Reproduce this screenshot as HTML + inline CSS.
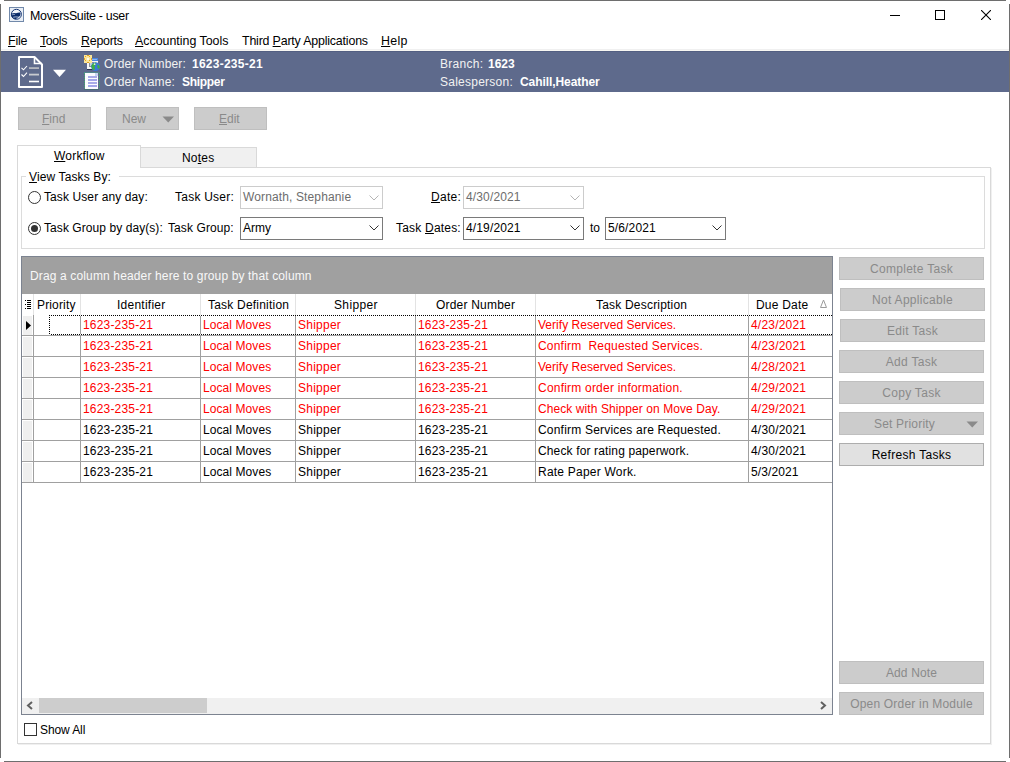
<!DOCTYPE html>
<html><head><meta charset="utf-8">
<style>
html,body{margin:0;padding:0;width:1010px;height:762px;overflow:hidden;background:#fff;position:relative}
div,span{box-sizing:border-box}
.a{position:absolute}
.t{position:absolute;white-space:pre;font-family:"Liberation Sans",sans-serif;font-size:12px;line-height:14px;color:#000}
.u{text-decoration:underline;text-underline-offset:1px}
.btn{position:absolute;background:#cccccc;border:1px solid #bfbfbf}
.dis{color:#8a8a8a}
.hl{background:#a0a0a0}
</style></head><body>

<!-- window border -->
<div class="a" style="left:4px;top:0;width:1002px;height:1px;background:#6e6e6e"></div>
<div class="a" style="left:4px;top:761px;width:1002px;height:1px;background:#6e6e6e"></div>
<div class="a" style="left:0;top:4px;width:1px;height:754px;background:#6e6e6e"></div>
<div class="a" style="left:1009px;top:4px;width:1px;height:754px;background:#6e6e6e"></div>

<!-- title bar -->
<svg class="a" style="left:9px;top:7px" width="15" height="15" viewBox="0 0 15 15">
  <rect x="0.5" y="0.5" width="14" height="14" fill="#e9eef5" stroke="#7189aa"/>
  <circle cx="7.4" cy="7.3" r="5" fill="#f2f5fa" stroke="#163574" stroke-width="1"/>
  <path d="M2.3 7 Q4.5 5.4 7 6.3 Q9.5 5.2 11.2 5.5 Q12 7 11 8.8 Q9 11 6.5 12.3 Q3.5 12 2.4 9.2 Z" fill="#0b2c6a"/>
  <path d="M3.2 7.8 Q4.5 7.2 5.8 7.4" fill="none" stroke="#cfdbee" stroke-width="0.8"/>
  <path d="M4.2 10.2 Q6.8 9.6 9.4 10.1 Q10.2 10.6 10.8 10" fill="none" stroke="#cfdbee" stroke-width="0.8"/>
</svg>
<div class="t" style="left:30px;top:9px;font-size:12.4px;letter-spacing:-0.29px">MoversSuite - user</div>
<div class="a" style="left:890px;top:15px;width:10px;height:1px;background:#000"></div>
<div class="a" style="left:935px;top:10px;width:10px;height:10px;border:1px solid #000"></div>
<svg class="a" style="left:981px;top:10px" width="10" height="10" viewBox="0 0 10 10"><path d="M0 0L10 10M10 0L0 10" stroke="#000" stroke-width="1.1"/></svg>

<!-- menu -->
<div class="t" style="left:8px;top:34px;font-size:12.4px;letter-spacing:-0.2px"><span class="u">F</span>ile</div>
<div class="t" style="left:40px;top:34px;font-size:12.4px;letter-spacing:-0.4px"><span class="u">T</span>ools</div>
<div class="t" style="left:81px;top:34px;font-size:12.4px;letter-spacing:-0.23px"><span class="u">R</span>eports</div>
<div class="t" style="left:135px;top:34px;font-size:12.4px;letter-spacing:0px"><span class="u">A</span>ccounting Tools</div>
<div class="t" style="left:242px;top:34px;font-size:12.4px;letter-spacing:-0.18px">Third <span class="u">P</span>arty Applications</div>
<div class="t" style="left:381px;top:34px;font-size:12.4px;letter-spacing:0.3px"><span class="u">H</span>elp</div>

<!-- header band -->
<div class="a" style="left:1px;top:49px;width:1008px;height:1px;background:#f0f0f0"></div>
<div class="a" style="left:1px;top:50px;width:1008px;height:1px;background:#f8f7f3"></div>
<div class="a" style="left:1px;top:51px;width:1008px;height:41px;background:#5e6a8c"></div>
<div class="a" style="left:1px;top:51px;width:1008px;height:1px;background:#535f82"></div>

<svg class="a" style="left:16px;top:54px" width="54" height="36" viewBox="0 0 54 36">
  <path d="M3 3 H18.5 L26 10.5 V33 H3 Z" fill="none" stroke="#fff" stroke-width="2" stroke-linejoin="round"/>
  <path d="M18.5 3 V9.5 H26" fill="none" stroke="#fff" stroke-width="1.6"/>
  <path d="M5.5 13.8 L7.5 15.8 L11 12" fill="none" stroke="#fff" stroke-width="1.1"/>
  <path d="M5.5 20.5 L7.5 22.5 L11 18.7" fill="none" stroke="#fff" stroke-width="1.1"/>
  <rect x="13" y="13.2" width="10" height="1.8" fill="#b4b7bf"/>
  <rect x="13" y="19.7" width="10" height="1.8" fill="#c8cacf"/>
  <rect x="13" y="26.7" width="10" height="1.6" fill="#fff"/>
  <path d="M37 15.8 H50 L43.5 23 Z" fill="#fff"/>
</svg>

<!-- order number icon -->
<svg class="a" style="left:83px;top:54px" width="18" height="36" viewBox="0 0 18 36" shape-rendering="crispEdges">
  <rect x="4" y="4" width="11" height="11" fill="#f6f6f6"/>
  <rect x="4" y="4" width="11" height="3" fill="#4a86e0"/>
  <rect x="5" y="5" width="9" height="1" fill="#8fb6f0"/>
  <rect x="6" y="8" width="5" height="5" fill="#8a8f9c"/>
  <rect x="7" y="9" width="3" height="3" fill="#c9d3e0"/>
  <rect x="4" y="15" width="8" height="1" fill="#2a3552"/>
  <rect x="1" y="1" width="8" height="8" fill="#fbe69a"/>
  <rect x="4" y="1" width="2" height="1" fill="#e6a21e"/><rect x="4" y="8" width="2" height="1" fill="#e6a21e"/>
  <rect x="1" y="4" width="1" height="2" fill="#e6a21e"/><rect x="8" y="4" width="1" height="2" fill="#e6a21e"/>
  <rect x="2" y="2" width="1" height="1" fill="#e6a21e"/><rect x="6" y="2" width="1" height="1" fill="#e6a21e"/>
  <rect x="2" y="6" width="1" height="1" fill="#e6a21e"/><rect x="6" y="6" width="1" height="1" fill="#e6a21e"/>
  <rect x="4" y="4" width="2" height="2" fill="#fffbe8"/>
</svg>
<svg class="a" style="left:83px;top:54px" width="18" height="36" viewBox="0 0 18 36">
  <circle cx="12.5" cy="12.6" r="4.4" fill="#3a78d8"/>
  <path d="M8.4 11.5 Q9.5 8.6 12.5 8.4 Q13.6 9.6 12.2 11 Q11 12.5 12 14.5 Q11.5 16.5 10.2 16 Q8.2 14 8.4 11.5Z" fill="#3cb043"/>
  <path d="M14.5 10.5 Q16.5 11 16.8 13 Q16 15.5 14.6 14.2 Q14 12 14.5 10.5Z" fill="#3cb043"/>
  <circle cx="11.6" cy="10.2" r="0.9" fill="#d8f5d0"/>
</svg>
<svg class="a" style="left:83px;top:71px" width="18" height="19" viewBox="0 0 18 19" shape-rendering="crispEdges">
  <rect x="2" y="2" width="13" height="16" fill="#fbfcff"/>
  <rect x="1" y="1" width="15" height="1" fill="#4f9c8c" opacity="0.6"/>
  <rect x="1" y="18" width="15" height="1" fill="#3e6f66" opacity="0.6"/>
  <path d="M1 2v1M1 4v1M1 6v1M1 8v1M1 10v1M1 12v1M1 14v1M1 16v1M16 2v1M16 4v1M16 6v1M16 8v1M16 10v1M16 12v1M16 14v1M16 16v1" stroke="#3fae6a" stroke-width="1" transform="translate(0.5,0)"/>
  <rect x="12" y="2" width="3" height="3" fill="#c8d4f0"/>
  <rect x="5" y="5" width="9" height="2" fill="#a9ace8"/>
  <rect x="5" y="8" width="9" height="2" fill="#a4a8ea"/>
  <rect x="5" y="11" width="9" height="2" fill="#a9ace8"/>
  <rect x="5" y="14" width="9" height="2" fill="#a4a8ea"/>
</svg>

<div class="t" style="left:104px;top:57px;color:#f2f2f2;letter-spacing:0.15px">Order Number:</div>
<div class="t" style="left:192px;top:57px;color:#fff;font-weight:bold;letter-spacing:0.25px">1623-235-21</div>
<div class="t" style="left:104px;top:75px;color:#f2f2f2;letter-spacing:0.15px">Order Name:</div>
<div class="t" style="left:182px;top:75px;color:#fff;font-weight:bold;letter-spacing:-0.3px">Shipper</div>
<div class="t" style="left:440px;top:57px;color:#f2f2f2;letter-spacing:0.3px">Branch:</div>
<div class="t" style="left:488px;top:57px;color:#fff;font-weight:bold">1623</div>
<div class="t" style="left:440px;top:75px;color:#f2f2f2;letter-spacing:0.25px">Salesperson:</div>
<div class="t" style="left:520px;top:75px;color:#fff;font-weight:bold;letter-spacing:-0.08px">Cahill,Heather</div>

<!-- toolbar buttons -->
<div class="btn" style="left:18px;top:107px;width:73px;height:23px"></div>
<div class="t dis" style="left:42px;top:112px"><span class="u">F</span>ind</div>
<div class="btn" style="left:106px;top:107px;width:73px;height:23px"></div>
<div class="t dis" style="left:122px;top:112px">New</div>
<svg class="a" style="left:162px;top:116px" width="13" height="7" viewBox="0 0 13 7"><path d="M0.5 0.5H12L6.25 6.5Z" fill="#8a8a8a"/></svg>
<div class="btn" style="left:194px;top:107px;width:73px;height:23px"></div>
<div class="t dis" style="left:219px;top:112px"><span class="u">E</span>dit</div>

<!-- tabs -->
<div class="a" style="left:140px;top:147px;width:117px;height:21px;background:#f0f0f0;border:1px solid #d9d9d9;border-bottom:none"></div>
<div class="a" style="left:17px;top:167px;width:974px;height:577px;border:1px solid #d9d9d9;background:#fff"></div>
<div class="a" style="left:991px;top:168px;width:1px;height:577px;background:#f0f0f0"></div>
<div class="a" style="left:18px;top:744px;width:974px;height:1px;background:#f0f0f0"></div>
<div class="a" style="left:17px;top:145px;width:124px;height:23px;background:#fff;border:1px solid #d9d9d9;border-bottom:none"></div>
<div class="t" style="left:54px;top:149px;letter-spacing:0.2px"><span class="u">W</span>orkflow</div>
<div class="t" style="left:182px;top:151px;letter-spacing:0.2px">No<span class="u">t</span>es</div>

<!-- group box -->
<div class="a" style="left:21px;top:176px;width:964px;height:73px;border:1px solid #dcdcdc"></div>
<div class="a" style="left:26px;top:170px;width:93px;height:14px;background:#fff"></div>
<div class="t" style="left:29px;top:170px;letter-spacing:0.12px"><span class="u">V</span>iew Tasks By:</div>

<svg class="a" style="left:28px;top:191px" width="13" height="13" viewBox="0 0 13 13"><circle cx="6.5" cy="6.5" r="6" fill="#fff" stroke="#333" stroke-width="1"/></svg>
<div class="t" style="left:44px;top:190px;letter-spacing:0.1px">Task User any day:</div>
<svg class="a" style="left:28px;top:222px" width="13" height="13" viewBox="0 0 13 13"><circle cx="6.5" cy="6.5" r="6" fill="#fff" stroke="#333" stroke-width="1"/><circle cx="6.5" cy="6.5" r="3.5" fill="#333"/></svg>
<div class="t" style="left:44px;top:221px;letter-spacing:0.07px">Task Group by day(s):</div>

<div class="t" style="left:175px;top:190px;letter-spacing:0.24px">Task User:</div>
<div class="t" style="left:168px;top:221px;letter-spacing:0.1px">Task Group:</div>

<div class="a" style="left:240px;top:186px;width:143px;height:23px;border:1px solid #cccccc"></div>
<div class="t" style="left:243px;top:190px;color:#6d6d6d;letter-spacing:0.13px">Wornath, Stephanie</div>
<svg class="a" style="left:369px;top:195px" width="10" height="6" viewBox="0 0 10 6"><path d="M0.5 0.5L5 5L9.5 0.5" fill="none" stroke="#b5b5b5" stroke-width="1"/></svg>
<div class="a" style="left:240px;top:217px;width:143px;height:23px;border:1px solid #7a7a7a"></div>
<div class="t" style="left:243px;top:221px">Army</div>
<svg class="a" style="left:369px;top:225px" width="10" height="6" viewBox="0 0 10 6"><path d="M0.5 0.5L5 5L9.5 0.5" fill="none" stroke="#333" stroke-width="1"/></svg>

<div class="t" style="left:431px;top:190px;letter-spacing:0.3px"><span class="u">D</span>ate:</div>
<div class="t" style="left:396px;top:221px;letter-spacing:0.2px">Task <span class="u">D</span>ates:</div>
<div class="a" style="left:463px;top:186px;width:121px;height:23px;border:1px solid #cccccc"></div>
<div class="t" style="left:466px;top:190px;color:#6d6d6d;letter-spacing:0.14px">4/30/2021</div>
<svg class="a" style="left:570px;top:195px" width="10" height="6" viewBox="0 0 10 6"><path d="M0.5 0.5L5 5L9.5 0.5" fill="none" stroke="#b5b5b5" stroke-width="1"/></svg>
<div class="a" style="left:463px;top:217px;width:121px;height:23px;border:1px solid #7a7a7a"></div>
<div class="t" style="left:466px;top:221px;letter-spacing:0.14px">4/19/2021</div>
<svg class="a" style="left:570px;top:225px" width="10" height="6" viewBox="0 0 10 6"><path d="M0.5 0.5L5 5L9.5 0.5" fill="none" stroke="#333" stroke-width="1"/></svg>
<div class="t" style="left:590px;top:221px">to</div>
<div class="a" style="left:605px;top:217px;width:121px;height:23px;border:1px solid #7a7a7a"></div>
<div class="t" style="left:608px;top:221px;letter-spacing:0.14px">5/6/2021</div>
<svg class="a" style="left:712px;top:225px" width="10" height="6" viewBox="0 0 10 6"><path d="M0.5 0.5L5 5L9.5 0.5" fill="none" stroke="#333" stroke-width="1"/></svg>

<!-- GRID -->
<div class="a" style="left:21px;top:256px;width:812px;height:459px;border:1px solid #7c8390;background:#fff"></div>
<div class="a" style="left:22px;top:257px;width:810px;height:37px;background:#a0a0a0"></div>
<div class="t" style="left:30px;top:269px;color:#f8f8f8;letter-spacing:0.14px">Drag a column header here to group by that column</div>
<div class="a" style="left:33px;top:294px;width:1px;height:21px;background:#e3e3e3"></div>
<div class="a" style="left:80px;top:294px;width:1px;height:21px;background:#e3e3e3"></div>
<div class="a" style="left:200px;top:294px;width:1px;height:21px;background:#e3e3e3"></div>
<div class="a" style="left:295px;top:294px;width:1px;height:21px;background:#e3e3e3"></div>
<div class="a" style="left:415px;top:294px;width:1px;height:21px;background:#e3e3e3"></div>
<div class="a" style="left:535px;top:294px;width:1px;height:21px;background:#e3e3e3"></div>
<div class="a" style="left:748px;top:294px;width:1px;height:21px;background:#e3e3e3"></div>
<div class="a" style="left:25px;top:300px;width:1px;height:1px;background:#000"></div>
<div class="a" style="left:25px;top:304px;width:1px;height:1px;background:#000"></div>
<div class="a" style="left:25px;top:308px;width:1px;height:1px;background:#000"></div>
<div class="a" style="left:27px;top:300px;width:4px;height:1px;background:#000"></div>
<div class="a" style="left:27px;top:302px;width:4px;height:1px;background:#000"></div>
<div class="a" style="left:27px;top:304px;width:4px;height:1px;background:#000"></div>
<div class="a" style="left:27px;top:306px;width:4px;height:1px;background:#000"></div>
<div class="a" style="left:27px;top:308px;width:4px;height:1px;background:#000"></div>
<div class="t" style="left:37px;top:298px;letter-spacing:0.15px">Priority</div>
<div class="t" style="left:117px;top:298px;letter-spacing:0.25px">Identifier</div>
<div class="t" style="left:208px;top:298px;letter-spacing:0.21px">Task Definition</div>
<div class="t" style="left:334px;top:298px;letter-spacing:0.35px">Shipper</div>
<div class="t" style="left:436px;top:298px;letter-spacing:0.2px">Order Number</div>
<div class="t" style="left:596px;top:298px;letter-spacing:0.2px">Task Description</div>
<div class="t" style="left:756px;top:298px;letter-spacing:0.2px">Due Date</div>
<svg class="a" style="left:820px;top:299px" width="7" height="9" viewBox="0 0 7 9"><path d="M0.5 8.5H6.5L3.5 1Z" fill="none" stroke="#9a9a9a" stroke-width="1"/></svg>
<div class="a" style="left:23px;top:316px;width:9px;height:19px;background:#efefef"></div>
<div class="a" style="left:22px;top:335px;width:810px;height:1px;background:#a0a0a0"></div>
<div class="a" style="left:33px;top:315px;width:1px;height:20px;background:#a0a0a0"></div>
<div class="a" style="left:80px;top:315px;width:1px;height:20px;background:#a0a0a0"></div>
<div class="a" style="left:200px;top:315px;width:1px;height:20px;background:#a0a0a0"></div>
<div class="a" style="left:295px;top:315px;width:1px;height:20px;background:#a0a0a0"></div>
<div class="a" style="left:415px;top:315px;width:1px;height:20px;background:#a0a0a0"></div>
<div class="a" style="left:535px;top:315px;width:1px;height:20px;background:#a0a0a0"></div>
<div class="a" style="left:748px;top:315px;width:1px;height:20px;background:#a0a0a0"></div>
<div class="t" style="left:83px;top:318px;color:#ff0000;letter-spacing:0.18px">1623-235-21</div>
<div class="t" style="left:203px;top:318px;color:#ff0000;letter-spacing:0.08px">Local Moves</div>
<div class="t" style="left:298px;top:318px;color:#ff0000;letter-spacing:0.25px">Shipper</div>
<div class="t" style="left:418px;top:318px;color:#ff0000;letter-spacing:0.18px">1623-235-21</div>
<div class="t" style="left:538px;top:318px;color:#ff0000;letter-spacing:0.03px">Verify Reserved Services.</div>
<div class="t" style="left:751px;top:318px;color:#ff0000;letter-spacing:0.2px">4/23/2021</div>
<div class="a" style="left:23px;top:337px;width:9px;height:19px;background:#efefef"></div>
<div class="a" style="left:22px;top:356px;width:810px;height:1px;background:#a0a0a0"></div>
<div class="a" style="left:33px;top:336px;width:1px;height:20px;background:#a0a0a0"></div>
<div class="a" style="left:80px;top:336px;width:1px;height:20px;background:#a0a0a0"></div>
<div class="a" style="left:200px;top:336px;width:1px;height:20px;background:#a0a0a0"></div>
<div class="a" style="left:295px;top:336px;width:1px;height:20px;background:#a0a0a0"></div>
<div class="a" style="left:415px;top:336px;width:1px;height:20px;background:#a0a0a0"></div>
<div class="a" style="left:535px;top:336px;width:1px;height:20px;background:#a0a0a0"></div>
<div class="a" style="left:748px;top:336px;width:1px;height:20px;background:#a0a0a0"></div>
<div class="t" style="left:83px;top:339px;color:#ff0000;letter-spacing:0.18px">1623-235-21</div>
<div class="t" style="left:203px;top:339px;color:#ff0000;letter-spacing:0.08px">Local Moves</div>
<div class="t" style="left:298px;top:339px;color:#ff0000;letter-spacing:0.25px">Shipper</div>
<div class="t" style="left:418px;top:339px;color:#ff0000;letter-spacing:0.18px">1623-235-21</div>
<div class="t" style="left:538px;top:339px;color:#ff0000;letter-spacing:0.2px">Confirm  Requested Services.</div>
<div class="t" style="left:751px;top:339px;color:#ff0000;letter-spacing:0.2px">4/23/2021</div>
<div class="a" style="left:23px;top:358px;width:9px;height:19px;background:#efefef"></div>
<div class="a" style="left:22px;top:377px;width:810px;height:1px;background:#a0a0a0"></div>
<div class="a" style="left:33px;top:357px;width:1px;height:20px;background:#a0a0a0"></div>
<div class="a" style="left:80px;top:357px;width:1px;height:20px;background:#a0a0a0"></div>
<div class="a" style="left:200px;top:357px;width:1px;height:20px;background:#a0a0a0"></div>
<div class="a" style="left:295px;top:357px;width:1px;height:20px;background:#a0a0a0"></div>
<div class="a" style="left:415px;top:357px;width:1px;height:20px;background:#a0a0a0"></div>
<div class="a" style="left:535px;top:357px;width:1px;height:20px;background:#a0a0a0"></div>
<div class="a" style="left:748px;top:357px;width:1px;height:20px;background:#a0a0a0"></div>
<div class="t" style="left:83px;top:360px;color:#ff0000;letter-spacing:0.18px">1623-235-21</div>
<div class="t" style="left:203px;top:360px;color:#ff0000;letter-spacing:0.08px">Local Moves</div>
<div class="t" style="left:298px;top:360px;color:#ff0000;letter-spacing:0.25px">Shipper</div>
<div class="t" style="left:418px;top:360px;color:#ff0000;letter-spacing:0.18px">1623-235-21</div>
<div class="t" style="left:538px;top:360px;color:#ff0000;letter-spacing:0.03px">Verify Reserved Services.</div>
<div class="t" style="left:751px;top:360px;color:#ff0000;letter-spacing:0.2px">4/28/2021</div>
<div class="a" style="left:23px;top:379px;width:9px;height:19px;background:#efefef"></div>
<div class="a" style="left:22px;top:398px;width:810px;height:1px;background:#a0a0a0"></div>
<div class="a" style="left:33px;top:378px;width:1px;height:20px;background:#a0a0a0"></div>
<div class="a" style="left:80px;top:378px;width:1px;height:20px;background:#a0a0a0"></div>
<div class="a" style="left:200px;top:378px;width:1px;height:20px;background:#a0a0a0"></div>
<div class="a" style="left:295px;top:378px;width:1px;height:20px;background:#a0a0a0"></div>
<div class="a" style="left:415px;top:378px;width:1px;height:20px;background:#a0a0a0"></div>
<div class="a" style="left:535px;top:378px;width:1px;height:20px;background:#a0a0a0"></div>
<div class="a" style="left:748px;top:378px;width:1px;height:20px;background:#a0a0a0"></div>
<div class="t" style="left:83px;top:381px;color:#ff0000;letter-spacing:0.18px">1623-235-21</div>
<div class="t" style="left:203px;top:381px;color:#ff0000;letter-spacing:0.08px">Local Moves</div>
<div class="t" style="left:298px;top:381px;color:#ff0000;letter-spacing:0.25px">Shipper</div>
<div class="t" style="left:418px;top:381px;color:#ff0000;letter-spacing:0.18px">1623-235-21</div>
<div class="t" style="left:538px;top:381px;color:#ff0000;letter-spacing:0.21px">Confirm order information.</div>
<div class="t" style="left:751px;top:381px;color:#ff0000;letter-spacing:0.2px">4/29/2021</div>
<div class="a" style="left:23px;top:400px;width:9px;height:19px;background:#efefef"></div>
<div class="a" style="left:22px;top:419px;width:810px;height:1px;background:#a0a0a0"></div>
<div class="a" style="left:33px;top:399px;width:1px;height:20px;background:#a0a0a0"></div>
<div class="a" style="left:80px;top:399px;width:1px;height:20px;background:#a0a0a0"></div>
<div class="a" style="left:200px;top:399px;width:1px;height:20px;background:#a0a0a0"></div>
<div class="a" style="left:295px;top:399px;width:1px;height:20px;background:#a0a0a0"></div>
<div class="a" style="left:415px;top:399px;width:1px;height:20px;background:#a0a0a0"></div>
<div class="a" style="left:535px;top:399px;width:1px;height:20px;background:#a0a0a0"></div>
<div class="a" style="left:748px;top:399px;width:1px;height:20px;background:#a0a0a0"></div>
<div class="t" style="left:83px;top:402px;color:#ff0000;letter-spacing:0.18px">1623-235-21</div>
<div class="t" style="left:203px;top:402px;color:#ff0000;letter-spacing:0.08px">Local Moves</div>
<div class="t" style="left:298px;top:402px;color:#ff0000;letter-spacing:0.25px">Shipper</div>
<div class="t" style="left:418px;top:402px;color:#ff0000;letter-spacing:0.18px">1623-235-21</div>
<div class="t" style="left:538px;top:402px;color:#ff0000;letter-spacing:0.08px">Check with Shipper on Move Day.</div>
<div class="t" style="left:751px;top:402px;color:#ff0000;letter-spacing:0.2px">4/29/2021</div>
<div class="a" style="left:23px;top:421px;width:9px;height:19px;background:#efefef"></div>
<div class="a" style="left:22px;top:440px;width:810px;height:1px;background:#a0a0a0"></div>
<div class="a" style="left:33px;top:420px;width:1px;height:20px;background:#a0a0a0"></div>
<div class="a" style="left:80px;top:420px;width:1px;height:20px;background:#a0a0a0"></div>
<div class="a" style="left:200px;top:420px;width:1px;height:20px;background:#a0a0a0"></div>
<div class="a" style="left:295px;top:420px;width:1px;height:20px;background:#a0a0a0"></div>
<div class="a" style="left:415px;top:420px;width:1px;height:20px;background:#a0a0a0"></div>
<div class="a" style="left:535px;top:420px;width:1px;height:20px;background:#a0a0a0"></div>
<div class="a" style="left:748px;top:420px;width:1px;height:20px;background:#a0a0a0"></div>
<div class="t" style="left:83px;top:423px;color:#000;letter-spacing:0.18px">1623-235-21</div>
<div class="t" style="left:203px;top:423px;color:#000;letter-spacing:0.08px">Local Moves</div>
<div class="t" style="left:298px;top:423px;color:#000;letter-spacing:0.25px">Shipper</div>
<div class="t" style="left:418px;top:423px;color:#000;letter-spacing:0.18px">1623-235-21</div>
<div class="t" style="left:538px;top:423px;color:#000;letter-spacing:0.2px">Confirm Services are Requested.</div>
<div class="t" style="left:751px;top:423px;color:#000;letter-spacing:0.2px">4/30/2021</div>
<div class="a" style="left:23px;top:442px;width:9px;height:19px;background:#efefef"></div>
<div class="a" style="left:22px;top:461px;width:810px;height:1px;background:#a0a0a0"></div>
<div class="a" style="left:33px;top:441px;width:1px;height:20px;background:#a0a0a0"></div>
<div class="a" style="left:80px;top:441px;width:1px;height:20px;background:#a0a0a0"></div>
<div class="a" style="left:200px;top:441px;width:1px;height:20px;background:#a0a0a0"></div>
<div class="a" style="left:295px;top:441px;width:1px;height:20px;background:#a0a0a0"></div>
<div class="a" style="left:415px;top:441px;width:1px;height:20px;background:#a0a0a0"></div>
<div class="a" style="left:535px;top:441px;width:1px;height:20px;background:#a0a0a0"></div>
<div class="a" style="left:748px;top:441px;width:1px;height:20px;background:#a0a0a0"></div>
<div class="t" style="left:83px;top:444px;color:#000;letter-spacing:0.18px">1623-235-21</div>
<div class="t" style="left:203px;top:444px;color:#000;letter-spacing:0.08px">Local Moves</div>
<div class="t" style="left:298px;top:444px;color:#000;letter-spacing:0.25px">Shipper</div>
<div class="t" style="left:418px;top:444px;color:#000;letter-spacing:0.18px">1623-235-21</div>
<div class="t" style="left:538px;top:444px;color:#000;letter-spacing:0.14px">Check for rating paperwork.</div>
<div class="t" style="left:751px;top:444px;color:#000;letter-spacing:0.2px">4/30/2021</div>
<div class="a" style="left:23px;top:463px;width:9px;height:19px;background:#efefef"></div>
<div class="a" style="left:22px;top:482px;width:810px;height:1px;background:#a0a0a0"></div>
<div class="a" style="left:33px;top:462px;width:1px;height:20px;background:#a0a0a0"></div>
<div class="a" style="left:80px;top:462px;width:1px;height:20px;background:#a0a0a0"></div>
<div class="a" style="left:200px;top:462px;width:1px;height:20px;background:#a0a0a0"></div>
<div class="a" style="left:295px;top:462px;width:1px;height:20px;background:#a0a0a0"></div>
<div class="a" style="left:415px;top:462px;width:1px;height:20px;background:#a0a0a0"></div>
<div class="a" style="left:535px;top:462px;width:1px;height:20px;background:#a0a0a0"></div>
<div class="a" style="left:748px;top:462px;width:1px;height:20px;background:#a0a0a0"></div>
<div class="t" style="left:83px;top:465px;color:#000;letter-spacing:0.18px">1623-235-21</div>
<div class="t" style="left:203px;top:465px;color:#000;letter-spacing:0.08px">Local Moves</div>
<div class="t" style="left:298px;top:465px;color:#000;letter-spacing:0.25px">Shipper</div>
<div class="t" style="left:418px;top:465px;color:#000;letter-spacing:0.18px">1623-235-21</div>
<div class="t" style="left:538px;top:465px;color:#000;letter-spacing:0.22px">Rate Paper Work.</div>
<div class="t" style="left:751px;top:465px;color:#000;letter-spacing:0.1px">5/3/2021</div>
<div class="a" style="left:49px;top:315px;width:783px;height:1px;background:repeating-linear-gradient(90deg,#000 0 1px,#fff 1px 2px)"></div>
<div class="a" style="left:49px;top:334px;width:783px;height:1px;background:repeating-linear-gradient(90deg,#000 0 1px,#fff 1px 2px)"></div>
<div class="a" style="left:49px;top:315px;width:1px;height:20px;background:repeating-linear-gradient(180deg,#000 0 1px,#fff 1px 2px)"></div>
<svg class="a" style="left:26px;top:321px" width="6" height="9" viewBox="0 0 6 9"><path d="M0 0L5 4.5L0 9Z" fill="#000"/></svg>
<div class="a" style="left:22px;top:698px;width:810px;height:16px;background:#f0f0f0"></div>
<div class="a" style="left:39px;top:698px;width:168px;height:15px;background:#cdcdcd"></div>
<svg class="a" style="left:26px;top:701px" width="8" height="9" viewBox="0 0 8 9"><path d="M6 1L2 4.5L6 8" fill="none" stroke="#606060" stroke-width="2"/></svg>
<svg class="a" style="left:819px;top:701px" width="8" height="9" viewBox="0 0 8 9"><path d="M2 1L6 4.5L2 8" fill="none" stroke="#606060" stroke-width="2"/></svg>

<!-- right buttons -->
<div class="btn" style="left:839px;top:257px;width:145px;height:23px"></div>
<div class="t dis" style="left:839px;top:262px;width:145px;text-align:center;letter-spacing:0.3px">Complete Task</div>
<div class="btn" style="left:840px;top:288px;width:145px;height:23px"></div>
<div class="t dis" style="left:840px;top:293px;width:145px;text-align:center;letter-spacing:0.3px">Not Applicable</div>
<div class="btn" style="left:840px;top:319px;width:145px;height:23px"></div>
<div class="t dis" style="left:840px;top:324px;width:145px;text-align:center;letter-spacing:0.3px">Edit Task</div>
<div class="btn" style="left:839px;top:350px;width:145px;height:23px"></div>
<div class="t dis" style="left:839px;top:355px;width:145px;text-align:center;letter-spacing:0.3px">Add Task</div>
<div class="btn" style="left:839px;top:381px;width:145px;height:23px"></div>
<div class="t dis" style="left:839px;top:386px;width:145px;text-align:center;letter-spacing:0.3px">Copy Task</div>
<div class="btn" style="left:839px;top:412px;width:145px;height:23px"></div>
<div class="t dis" style="left:839px;top:417px;width:131px;text-align:center;letter-spacing:0.2px">Set Priority</div>
<svg class="a" style="left:966px;top:421px" width="13" height="7" viewBox="0 0 13 7"><path d="M0.5 0.5H12L6.25 6.5Z" fill="#8a8a8a"/></svg>
<div class="a" style="left:839px;top:443px;width:145px;height:23px;background:#e1e1e1;border:1px solid #adadad"></div>
<div class="t" style="left:839px;top:448px;width:145px;text-align:center;letter-spacing:0.3px">Refresh Tasks</div>
<div class="btn" style="left:839px;top:661px;width:145px;height:23px"></div>
<div class="t dis" style="left:839px;top:666px;width:145px;text-align:center;letter-spacing:0.15px">Add Note</div>
<div class="btn" style="left:839px;top:692px;width:145px;height:23px"></div>
<div class="t dis" style="left:839px;top:697px;width:145px;text-align:center;letter-spacing:0.2px">Open Order in Module</div>

<!-- show all -->
<div class="a" style="left:24px;top:723px;width:13px;height:13px;border:1px solid #333;background:#fff"></div>
<div class="t" style="left:40px;top:723px;letter-spacing:-0.1px">Show All</div>

</body></html>
